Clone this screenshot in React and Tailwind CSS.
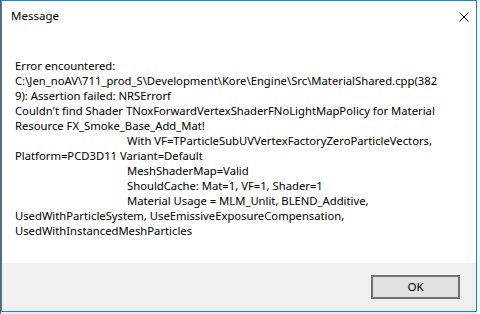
const LINES = [
  { text: 'Error encountered:' },
  { text: 'C:\\Jen_noAV\\711_prod_S\\Development\\Kore\\Engine\\Src\\MaterialShared.cpp(382' },
  { text: '9): Assertion failed: NRSErrorf' },
  { text: "Couldn't find Shader TNoxForwardVertexShaderFNoLightMapPolicy for Material" },
  { text: 'Resource FX_Smoke_Base_Add_Mat!' },
  { text: 'With VF=TParticleSubUVVertexFactoryZeroParticleVectors,', indent: true },
  { text: 'Platform=PCD3D11 Variant=Default' },
  { text: 'MeshShaderMap=Valid', indent: true },
  { text: 'ShouldCache: Mat=1, VF=1, Shader=1', indent: true },
  { text: 'Material Usage = MLM_Unlit, BLEND_Additive,', indent: true },
  { text: 'UsedWithParticleSystem, UseEmissiveExposureCompensation,' },
  { text: 'UsedWithInstancedMeshParticles' },
]

export default function App() {
  return (
    <div className="w-[480px] h-[314px] flex bg-[#e6ecf2] overflow-hidden font-['Noto_Sans',sans-serif]">
      {/* desktop strip */}
      <div className="w-[1px] h-full bg-[#8a5a3a]" />

      {/* Window */}
      <div className="w-[476px] h-[312px] border border-[#1883d7] bg-white flex flex-col">
        {/* Title bar */}
        <div className="h-[30px] flex items-center justify-between pl-[9px] pr-[7px]">
          <span className="text-[11.5px] text-black">Message</span>
          <svg width="10" height="10" viewBox="0 0 10 10" className="mt-[1px]">
            <path d="M0.5 0.5 L9.5 9.5 M9.5 0.5 L0.5 9.5" stroke="#000" strokeWidth="1" fill="none" />
          </svg>
        </div>

        {/* Body */}
        <div className="flex-1 pt-[27px] pl-[13px] text-[11.25px] leading-[15px] text-black">
          {LINES.map((l, i) => (
            <div key={i} className={`whitespace-pre ${l.indent ? 'pl-[112px]' : ''}`}>{l.text}</div>
          ))}
        </div>

        {/* Footer */}
        <div className="h-[48px] bg-[#f0f0f0] flex items-center justify-end pr-[16px]">
          <button className="w-[89px] h-[24px] bg-[#e1e1e1] border-2 border-[#717171] text-[11.5px] text-black">
            OK
          </button>
        </div>
      </div>

      <div className="flex-1 bg-[#f4f7fa]" />
    </div>
  )
}
